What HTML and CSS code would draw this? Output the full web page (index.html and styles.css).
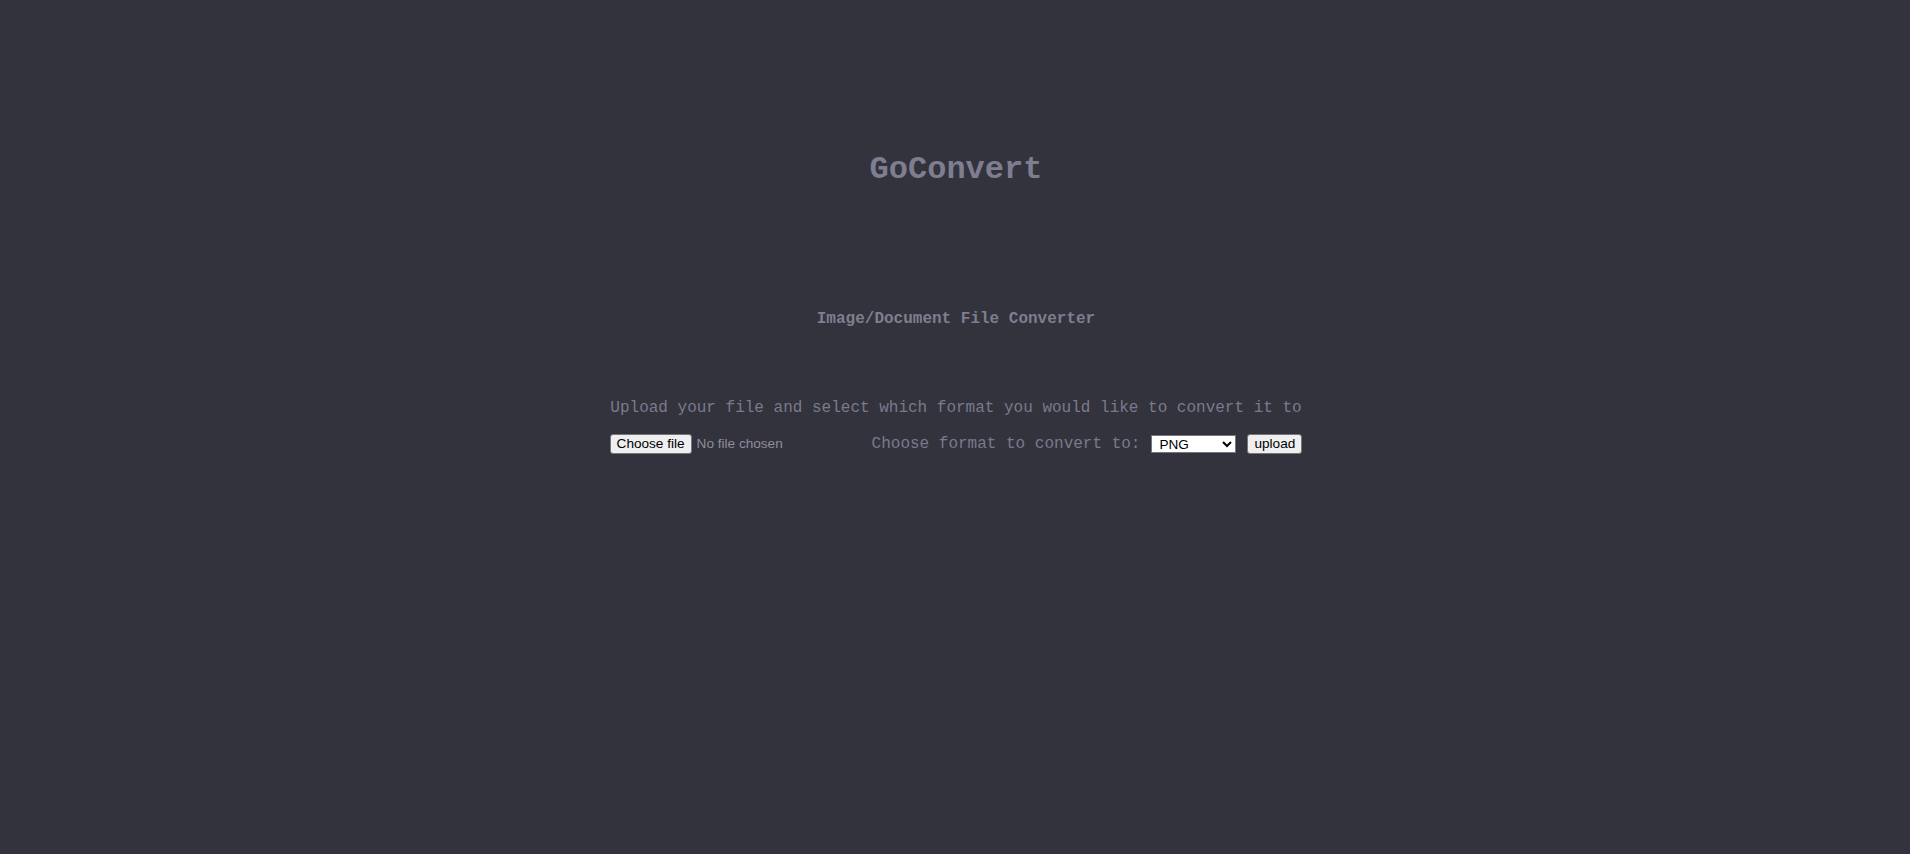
FILE: index.html
```html
<!DOCTYPE html>
<html lang="en">
<head>
<meta charset="utf-8">
<title>GoConvert</title>
<link rel="stylesheet" href="styles.css">
</head>
<body>
<main class="page">
  <h1 class="title">GoConvert</h1>
  <h4 class="subtitle">Image/Document File Converter</h4>
  <p class="intro">Upload your file and select which format you would like to convert it to</p>
  <form class="form">
    <div class="file">
      <label class="file-button">Choose file<input type="file" class="file-input" name="file"></label>
      <span class="file-name">No file chosen</span>
    </div>
    <label class="format-label" for="format">Choose format to convert to:</label>
    <select class="format" id="format" name="format">
      <option>PNG</option>
      <option>JPG</option>
      <option>GIF</option>
      <option>PDF</option>
    </select>
    <button type="button" class="upload">upload</button>
  </form>
</main>
</body>
</html>
```

FILE: styles.css
```css
html, body {
  margin: 0;
  padding: 0;
}

body {
  background: #33333d;
  color: #7c7c8e;
  font-family: "Liberation Mono", "Courier New", monospace;
  font-size: 16px;
  min-height: 854px;
}

.page {
  display: flex;
  flex-direction: column;
  align-items: center;
  padding: 152px 0 0 2px;
}

.title {
  margin: 0;
  font-size: 32px;
  line-height: 36px;
  font-weight: bold;
  color: #7e7e90;
}

.subtitle {
  margin: 122px 0 0;
  font-size: 16px;
  line-height: 18px;
  font-weight: bold;
  color: #7e7e90;
}

.intro {
  margin: 71px 0 0;
  font-size: 16px;
  line-height: 18px;
  color: #7a7a8c;
}

.form {
  margin-top: 17px;
  display: flex;
  align-items: center;
  height: 20px;
}

.file {
  width: 262px;
  display: flex;
  align-items: center;
  font-family: "Liberation Sans", Arial, sans-serif;
  font-size: 13.33px;
}

.file-button {
  box-sizing: border-box;
  display: flex;
  align-items: center;
  height: 20px;
  width: 82px;
  justify-content: center;
  margin-right: 5px;
  background: #efefef;
  border: 1px solid #767676;
  border-radius: 3px;
  color: #000;
  font-size: 13.6px;
  line-height: 16px;
  cursor: default;
}

.file-input {
  display: none;
}

.file-name {
  color: #8e8e9c;
  font-size: 13.6px;
  line-height: 16px;
  white-space: nowrap;
}

.format-label {
  width: 268.8px;
  line-height: 18px;
  white-space: nowrap;
  color: #7a7a8c;
}

.format {
  box-sizing: border-box;
  width: 85px;
  height: 18px;
  margin: 0 0 0 11px;
  padding: 0 0 0 3px;
  background: #fff;
  border: 1px solid #767676;
  border-radius: 0;
  color: #000;
  font-family: "Liberation Sans", Arial, sans-serif;
  font-size: 13.6px;
}

.upload {
  box-sizing: border-box;
  width: 55px;
  height: 20px;
  margin: 0 0 0 11px;
  padding: 0 6px;
  background: #efefef;
  border: 1px solid #767676;
  border-radius: 3px;
  color: #000;
  font-family: "Liberation Sans", Arial, sans-serif;
  font-size: 13.6px;
  line-height: 16px;
}
```
